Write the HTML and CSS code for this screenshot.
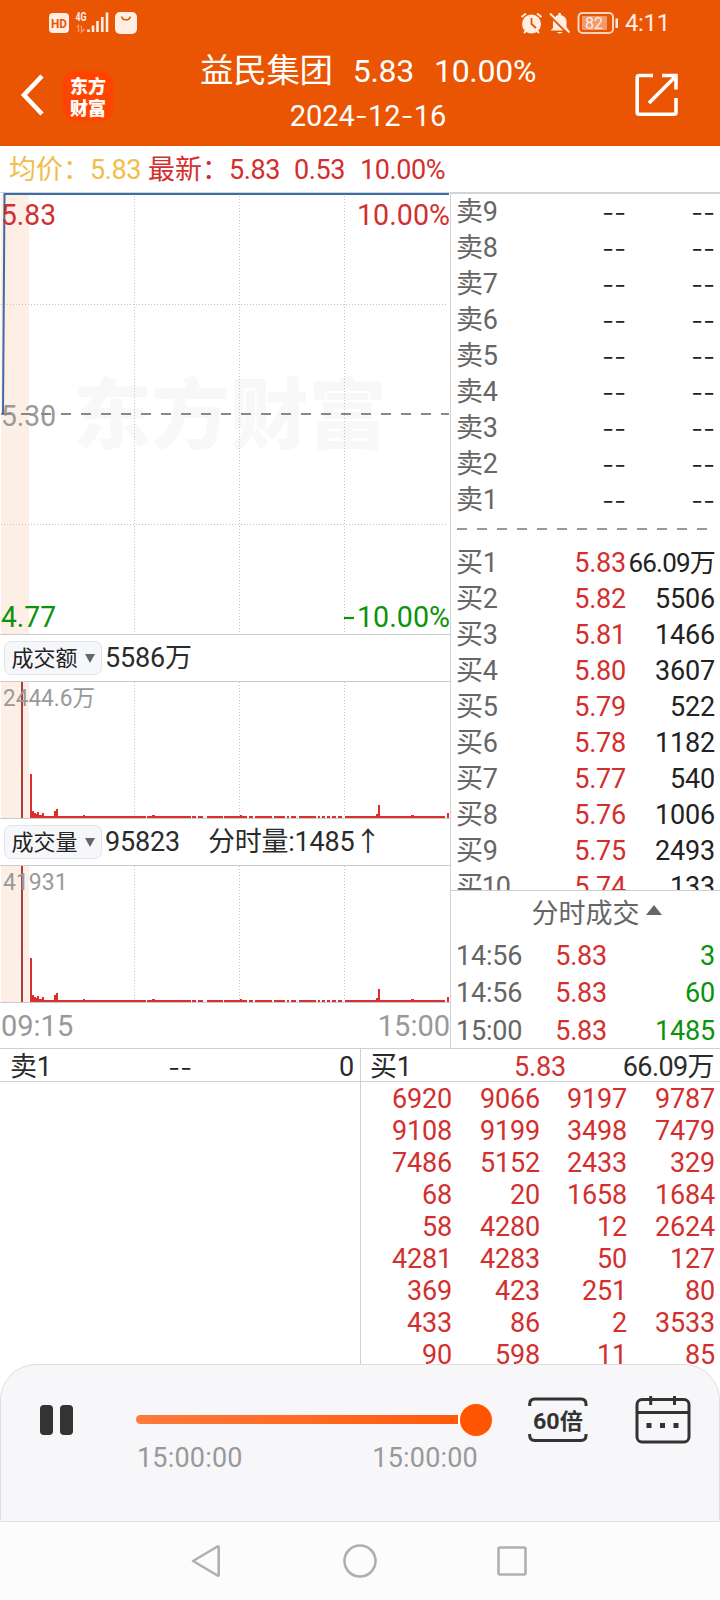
FILE: index.html
```
<!DOCTYPE html>
<html lang="zh-CN">
<head>
    <meta charset="UTF-8">
    <meta name="viewport" content="width=device-width, initial-scale=1.0">
    <title>益民集团 分时回放</title>
    <link rel="stylesheet" href="styles.css">
</head>
<body>
    <header class="header">
        <div class="status">
            <svg class="status-left" width="92" height="26" viewBox="47 10 92 26">
                <rect x="49" y="13" width="20" height="20" rx="4" fill="#feeee4"/>
                <text x="51" y="28" class="hd" textLength="16" lengthAdjust="spacingAndGlyphs">HD</text>
                <text x="75.5" y="21" class="net" textLength="11" lengthAdjust="spacingAndGlyphs">4G</text>
                <path d="M76.500 27 L78.500 25.500 V32 M81.500 25.500 V32 L84.500 29" fill="none" stroke="#f39a6c" stroke-width="1.400"/>
                <path d="M88.500 29.500V32M93 25.500V32M97.500 21V32M102.300 17V32M107 12.500V32" stroke="#feeee4" stroke-width="2.600"/>
                <rect x="115" y="12" width="22" height="22" rx="5" fill="#feeee4"/>
                <path d="M121.500 16.500a4.700 4.700 0 0 0 9 0" fill="none" stroke="#ea5504" stroke-width="1.500"/>
            </svg>
            <div class="status-right">
                <svg width="98" height="24" viewBox="520 11 98 24">
                    <circle cx="531.500" cy="24" r="9.500" fill="#feeee4"/>
                    <path d="M521.500 17L526 13.500M541.500 17L537 13.500M524 33L527 30M539 33L536 30" stroke="#feeee4" stroke-width="2"/>
                    <path d="M531.500 18V24L536 28" fill="none" stroke="#ea5504" stroke-width="1.800"/>
                    <path d="M553 28V21.500Q554 16 558.300 15V13.500Q559.500 12 561 13.500V15Q566.500 16.500 566.500 22V27L569 30.500H550.500ZM557 32H562.500Q559.700 35 557 32Z" fill="#feeee4"/>
                    <path d="M549 15L568 34" stroke="#ea5504" stroke-width="2"/>
                    <path d="M550 13.500L569.500 32.500" stroke="#feeee4" stroke-width="1.800"/>
                    <rect x="578.500" y="13" width="34.500" height="20" rx="4" fill="none" stroke="#fbd3bd" stroke-width="2"/>
                    <rect x="582" y="16" width="25" height="14" rx="1" fill="#f3996c"/>
                    <path d="M616.800 18.500V28" stroke="#feeee4" stroke-width="2.600"/>
                    <text x="585" y="28.500" class="bat" textLength="18">82</text>
                </svg>
                <span class="clock">4:11</span>
            </div>
        </div>
        <div class="title-bar">
            <svg class="back" width="24" height="44" viewBox="0 0 24 44">
                <path d="M22 3L4 22L22 41" fill="none" stroke="#fff" stroke-width="4.600"/>
            </svg>
            <div class="logo"><span>东方</span><span>财富</span></div>
            <div class="title">
                <div class="stock"><span class="name">益民集团</span><span>5.83</span><span>10.00%</span></div>
                <div class="date">2024<i>-</i>12<i>-</i>16</div>
            </div>
            <svg class="share" width="44" height="44" viewBox="0 0 44 44">
                <path d="M18 2.500H4Q2.200 2.500 2.200 4.500V39.500Q2.200 41.300 4 41.300H39Q41 41.300 41 39.500V25M27 2.500H41V16.500M14 30L40 4" fill="none" stroke="#fff" stroke-width="3.600"/>
            </svg>
        </div>
    </header>

    <div class="quote">
        <span class="avg-label">均价：</span><span class="avg">5.83</span>
        <span class="last-label">最新：</span><span class="last">5.83</span><span class="diff">0.53</span><span class="pct">10.00%</span>
    </div>

    <main class="market">
        <section class="charts">
            <svg class="price-chart" width="450" height="442" viewBox="0 192 450 442">
                <text x="73" y="443" class="watermark" textLength="314" lengthAdjust="spacingAndGlyphs">东方财富</text>
                <rect x="1" y="194" width="28" height="440" class="auction"/>
                <path d="M134.500 196V634M239.500 196V634M344.500 196V634" class="grid-v"/>
                <path d="M1 304.500H448M1 524.500H448" class="grid-h"/>
                <text x="1" y="426" class="mark grey" textLength="55" lengthAdjust="spacingAndGlyphs">5.30</text>
                <path d="M1 414H449" class="mid"/>
                <path d="M0 192.500H450" stroke="#cfd4da"/>
                <path d="M3 414L4.500 194H449" class="price-line"/>
                <text x="1" y="225" class="mark red" textLength="55" lengthAdjust="spacingAndGlyphs">5.83</text>
                <text x="357" y="225" class="mark red" textLength="93" lengthAdjust="spacingAndGlyphs">10.00%</text>
                <text x="1" y="626.500" class="mark green" textLength="55" lengthAdjust="spacingAndGlyphs">4.77</text>
                <path d="M344 618H354" stroke="#0b930b" stroke-width="2.200"/>
                <text x="357" y="626.500" class="mark green" textLength="93" lengthAdjust="spacingAndGlyphs">10.00%</text>
            </svg>
            <div class="indicator">
                <button class="picker"><span>成交额</span><i></i></button><span>5586万</span>
            </div>
            <svg class="vol-chart" width="450" height="136" viewBox="0 0 450 136">
                <g id="bars">
                    <rect x="1" y="0" width="28" height="136" class="auction"/>
                    <path d="M134.500 0V134M239.500 0V134M344.500 0V134" class="grid-v"/>
                    <path d="M22 0V136" stroke="#a8403c" stroke-width="2"/>
                    <path d="M30 136V92h2v37h2v2h2v1h1v-2h2v3h3v-2h2v3h10v-5h2v-2h2v7h25v-1h2v1h61v2Z
                        M147 136v-2h5v-1h3v1h36v2ZM192 134h4v2h-4ZM198 134h5v2h-5ZM207 134h16v2h-16ZM224 134h16v-1h2v1h5v2h-23Z
                        M249 134h4v2h-4ZM255 134h17v2h-17ZM274 134h11v2h-11ZM287 134h2v2h-2ZM291 134h5v2h-5ZM299 134h17v2h-17ZM318 134h2v2h-2ZM322 134h3v2h-3ZM327 134h3v2h-3ZM332 134h4v2h-4ZM338 134h4v2h-4Z
                        M345 134h31v-2h2v-9h2v11h31v-1h3v1h31v2h-100ZM447 131h2v5h-2Z" fill="#dc2f2d"/>
                </g>
                <text x="3" y="24" class="peak" textLength="92" lengthAdjust="spacingAndGlyphs">2444.6万</text>
            </svg>
            <div class="indicator">
                <button class="picker"><span>成交量</span><i></i></button><span>95823</span><span class="minute-vol">分时量:1485↑</span>
            </div>
            <svg class="vol-chart" width="450" height="136" viewBox="0 0 450 136">
                <use href="#bars"/>
                <text x="3" y="24" class="peak">41931</text>
            </svg>
            <div class="times"><span>09:15</span><span>15:00</span></div>
        </section>

        <aside class="book">
            <div class="levels">
                <div class="level"><span>卖9</span><b class="dash">--</b><em class="dash">--</em></div>
                <div class="level"><span>卖8</span><b class="dash">--</b><em class="dash">--</em></div>
                <div class="level"><span>卖7</span><b class="dash">--</b><em class="dash">--</em></div>
                <div class="level"><span>卖6</span><b class="dash">--</b><em class="dash">--</em></div>
                <div class="level"><span>卖5</span><b class="dash">--</b><em class="dash">--</em></div>
                <div class="level"><span>卖4</span><b class="dash">--</b><em class="dash">--</em></div>
                <div class="level"><span>卖3</span><b class="dash">--</b><em class="dash">--</em></div>
                <div class="level"><span>卖2</span><b class="dash">--</b><em class="dash">--</em></div>
                <div class="level"><span>卖1</span><b class="dash">--</b><em class="dash">--</em></div>
                <div class="split"></div>
                <div class="level"><span>买1</span><b>5.83</b><em class="wan">66.09万</em></div>
                <div class="level"><span>买2</span><b>5.82</b><em>5506</em></div>
                <div class="level"><span>买3</span><b>5.81</b><em>1466</em></div>
                <div class="level"><span>买4</span><b>5.80</b><em>3607</em></div>
                <div class="level"><span>买5</span><b>5.79</b><em>522</em></div>
                <div class="level"><span>买6</span><b>5.78</b><em>1182</em></div>
                <div class="level"><span>买7</span><b>5.77</b><em>540</em></div>
                <div class="level"><span>买8</span><b>5.76</b><em>1006</em></div>
                <div class="level"><span>买9</span><b>5.75</b><em>2493</em></div>
                <div class="level"><span class="ten">买10</span><b>5.74</b><em>133</em></div>
            </div>
            <div class="ticks">
                <div class="ticks-title">分时成交<i></i></div>
                <div class="tick"><span>14:56</span><b>5.83</b><em>3</em></div>
                <div class="tick"><span>14:56</span><b>5.83</b><em>60</em></div>
                <div class="tick"><span>15:00</span><b>5.83</b><em>1485</em></div>
            </div>
        </aside>
    </main>

    <section class="queue">
        <div class="side sell">
            <div class="side-head"><span>卖1</span><b class="dash">--</b><em>0</em></div>
        </div>
        <div class="side buy">
            <div class="side-head"><span>买1</span><b>5.83</b><em>66.09万</em></div>
            <div class="orders">
                <span>6920</span><span>9066</span><span>9197</span><span>9787</span>
                <span>9108</span><span>9199</span><span>3498</span><span>7479</span>
                <span>7486</span><span>5152</span><span>2433</span><span>329</span>
                <span>68</span><span>20</span><span>1658</span><span>1684</span>
                <span>58</span><span>4280</span><span>12</span><span>2624</span>
                <span>4281</span><span>4283</span><span>50</span><span>127</span>
                <span>369</span><span>423</span><span>251</span><span>80</span>
                <span>433</span><span>86</span><span>2</span><span>3533</span>
                <span>90</span><span>598</span><span>11</span><span>85</span>
            </div>
        </div>
    </section>

    <footer class="player">
        <div class="pause"><i></i><i></i></div>
        <div class="progress">
            <div class="track"><div class="bar"></div><div class="knob"></div></div>
            <div class="progress-times"><span>15:00:00</span><span>15:00:00</span></div>
        </div>
        <svg class="speed" width="60" height="46" viewBox="0 0 60 46">
            <path d="M1.700 9V7Q1.700 2 6.700 2H53Q58 2 58 7V9M1.700 37V38.500Q1.700 43.500 6.700 43.500H53Q58 43.500 58 38.500V37" fill="none" stroke="#333" stroke-width="3"/>
            <text x="5" y="32" textLength="50" lengthAdjust="spacingAndGlyphs">60倍</text>
        </svg>
        <svg class="calendar" width="56" height="48" viewBox="0 0 56 48">
            <rect x="2" y="3.500" width="52" height="42.500" rx="5" fill="none" stroke="#333" stroke-width="3"/>
            <path d="M2 16.500H54M15.700 0V9M39.500 0V9" stroke="#333" stroke-width="3"/>
            <path d="M11.500 27h5v5h-5ZM25 27h5v5h-5ZM38.500 27h5v5h-5Z" fill="#333"/>
        </svg>
    </footer>

    <nav class="nav">
        <svg width="338" height="36" viewBox="190 1543 338 36" fill="none" stroke="#b0b0b0" stroke-width="2.600" stroke-linejoin="round">
            <path d="M193 1561L217.500 1546.500Q218.700 1546 218.700 1547.500V1574.500Q218.700 1576 217.500 1575.500Z"/>
            <circle cx="360" cy="1561" r="15.500"/>
            <rect x="498.500" y="1547.500" width="27" height="27" rx="1.500"/>
        </svg>
    </nav>
</body>
</html>
```
FILE: styles.css
```
* {
    box-sizing: border-box;
    margin: 0;
    padding: 0;
}

body {
    width: 720px;
    height: 1600px;
    overflow: hidden;
    display: flex;
    flex-direction: column;
    font-family: Roboto, "Noto Sans CJK SC", sans-serif;
    font-size: 27px;
    color: #2b2b2b;
    background-color: #fff;
}

b, em, i {
    font-weight: normal;
    font-style: normal;
}

svg {
    display: block;
    flex: none;
}

/* header */
.header {
    height: 146px;
    flex: none;
    background-color: #ea5504;
    color: #fff;
}

.status {
    height: 46px;
    padding: 0 50px 0 47px;
    display: flex;
    justify-content: space-between;
    align-items: center;
}

.status-right {
    display: flex;
    align-items: center;
    gap: 7px;
}

.status text {
    font-size: 13px;
    fill: #feeee4;
}

.status .hd {
    font-weight: bold;
    fill: #ea5504;
}

.status .net {
    font-size: 12px;
    font-weight: bold;
}

.status .bat {
    font-size: 16px;
}

.clock {
    font-size: 24px;
    line-height: 48px;
    letter-spacing: -0.3px;
    color: #feeee4;
}

.title-bar {
    height: 100px;
    padding: 0 41px 0 20px;
    display: flex;
    align-items: center;
}

.back {
    margin-top: -2px;
}

.logo {
    width: 50px;
    height: 50px;
    margin: 0 0 0 19px;
    padding-top: 3px;
    border-radius: 11px;
    background-color: #ff4400;
    display: flex;
    flex-direction: column;
    align-items: center;
    font: 900 18px/22px "Noto Sans CJK SC", sans-serif;
}

.title {
    flex: 1;
    margin-right: 12px;
    text-align: center;
}

.stock {
    height: 48px;
    line-height: 50px;
    font-size: 32px;
    letter-spacing: -0.3px;
    display: flex;
    justify-content: center;
    gap: 20px;
}

.stock .name {
    font-size: 33.5px;
}

.date {
    height: 44px;
    margin-bottom: 8px;
    font-size: 29px;
    line-height: 43px;
}

.date i {
    font-family: Inter, sans-serif;
    font-weight: 300;
}

.share {
    margin-top: -2px;
}

/* quote line */
.quote {
    height: 46px;
    flex: none;
    padding-left: 9px;
    display: flex;
    line-height: 48px;
    color: #d32f2f;
    letter-spacing: -0.4px;
}

.avg-label, .last-label {
    width: 81px;
    white-space: nowrap;
    letter-spacing: 0;
}

.avg-label, .avg {
    color: #f0be4a;
}

.avg {
    width: 58px;
}

.last {
    width: 65px;
}

.diff {
    width: 66px;
}

/* charts */
.market {
    height: 856px;
    flex: none;
    display: flex;
}

.charts {
    width: 450px;
}

.auction {
    fill: #fdeee6;
}

.grid-v, .grid-h {
    stroke: #c4c4c4;
    stroke-width: 1;
    stroke-dasharray: 1 2;
    fill: none;
}

.mid {
    stroke: #888;
    stroke-width: 2;
    stroke-dasharray: 10 10;
}

.price-line {
    fill: none;
    stroke: #3c6da5;
    stroke-width: 2;
}

.watermark {
    font: 900 77px "Noto Sans CJK SC", sans-serif;
    fill: #f8f8f8;
}

.mark {
    font-size: 29px;
}

.red {
    fill: #d32f2f;
}

.green {
    fill: #0b930b;
}

.grey {
    fill: #999;
}

.peak {
    font-size: 23px;
    fill: #999;
}

.indicator {
    height: 48px;
    padding-left: 4px;
    border-top: 1px solid #ccc;
    border-bottom: 1px solid #ccc;
    display: flex;
    align-items: center;
    line-height: 46px;
    letter-spacing: -0.2px;
}

.picker {
    width: 98px;
    height: 34px;
    margin-right: 3px;
    border: 1px solid #e2e4e8;
    border-radius: 7px;
    background-color: #f6f7fa;
    display: flex;
    align-items: center;
    justify-content: center;
    gap: 7px;
    font: 22px/26px "Noto Sans CJK SC", sans-serif;
    color: #222;
}

.picker span {
    margin-top: -4px;
}

.picker i {
    border: 5.5px solid transparent;
    border-top: 9px solid #666;
    border-bottom: 0;
}

.minute-vol {
    margin-left: 28px;
}

.times {
    height: 46px;
    padding-left: 1px;
    border-top: 1px solid #ccc;
    display: flex;
    justify-content: space-between;
    line-height: 46px;
    font-size: 29px;
    color: #999;
}

/* order book */
.book {
    width: 270px;
    border-top: 2px solid #d0d4da;
    border-left: 1px solid #d0d0d0;
}

.levels {
    height: 696px;
    overflow: hidden;
}

.level, .tick {
    display: grid;
    padding: 0 5px;
    color: #666;
    white-space: nowrap;
    letter-spacing: -0.2px;
}

.level {
    grid-template-columns: 1fr 80px 89px;
    height: 36px;
    line-height: 37px;
}

.level b, .level em, .tick b, .tick em {
    text-align: right;
}

.level b, .tick b {
    color: #d32f2f;
}

.level em {
    color: #222;
}

.level .wan {
    font-size: 26px;
    letter-spacing: -0.8px;
}

.level .ten {
    letter-spacing: -1.2px;
}

.level .dash, .side-head .dash {
    font-family: Inter, sans-serif;
    font-weight: 300;
    color: #222;
}

.split {
    height: 26px;
    margin: 0 13px 0 6px;
    background: repeating-linear-gradient(90deg, #999 0 10px, transparent 10px 20px) 0 10px / 100% 2px no-repeat;
}

.split + .level, .split ~ .level {
    line-height: 38px;
}

.ticks {
    border-top: 1px solid #d0d0d0;
}

.ticks-title {
    height: 46px;
    line-height: 47px;
    padding-left: 22px;
    display: flex;
    justify-content: center;
    gap: 6px;
    color: #666;
}

.ticks-title i {
    height: 10px;
    margin-top: 14px;
    border: 8px solid transparent;
    border-bottom: 10px solid #666;
    border-top: 0;
}

.tick {
    grid-template-columns: 71px 80px 1fr;
    height: 37.3px;
    line-height: 39px;
}

.tick em {
    color: #0b930b;
}

/* order queue */
.queue {
    height: 316px;
    flex: none;
    border-top: 1px solid #d0d0d0;
    display: flex;
    overflow: hidden;
}

.side {
    width: 360px;
}

.buy {
    border-left: 1px solid #d0d0d0;
}

.side-head {
    height: 33px;
    padding: 0 6px 0 10px;
    border-bottom: 1px solid #d0d0d0;
    display: flex;
    justify-content: space-between;
    line-height: 37px;
    letter-spacing: -0.2px;
}

.side-head span, .side-head em {
    flex: 1;
}

.side-head em {
    text-align: right;
}

.buy .side-head {
    padding-left: 9px;
}

.buy .side-head em {
    letter-spacing: -0.6px;
}

.side-head .dash {
    margin-right: 4px;
}

.buy .side-head b {
    margin-right: 4px;
    color: #d32f2f;
}

.orders {
    padding-right: 5px;
    display: grid;
    grid-template-columns: 91px 88px 87px 88px;
    grid-auto-rows: 32px;
    line-height: 34px;
    text-align: right;
    color: #d32f2f;
    letter-spacing: -0.2px;
}

/* playback controls */
.player {
    height: 158px;
    flex: none;
    padding: 0 28px 0 39px;
    border: 1px solid #dedfe2;
    border-radius: 36px 36px 0 0;
    background-color: #f7f7fa;
    display: flex;
}

.pause {
    display: flex;
    gap: 7px;
    margin: 40px 63px 0 0;
}

.pause i {
    width: 13px;
    height: 30px;
    border-radius: 4px;
    background-color: #333;
}

.progress {
    width: 358px;
    margin-top: 38px;
}

.track {
    height: 34px;
    display: flex;
    align-items: center;
}

.bar {
    width: 324px;
    height: 9px;
    margin-top: -1px;
    border-radius: 5px 0 0 5px;
    background: linear-gradient(90deg, #ff7a3c, #ff5a0c);
}

.knob {
    width: 36px;
    height: 36px;
    border: 2px solid #fff5ee;
    border-radius: 50%;
    background-color: #ff5500;
}

.progress-times {
    padding: 0 16px 0 1px;
    display: flex;
    justify-content: space-between;
    line-height: 43px;
    letter-spacing: 0.2px;
    color: #999;
}

.speed {
    margin: 32px 0 0 34px;
}

.speed text {
    font: bold 22px Roboto, "Noto Sans CJK SC", sans-serif;
    fill: #333;
}

.calendar {
    margin: 31px 0 0 47px;
}

/* system navigation */
.nav {
    flex: 1;
    padding: 21px 0 0 190px;
    background-color: #fcfcfc;
}
```
